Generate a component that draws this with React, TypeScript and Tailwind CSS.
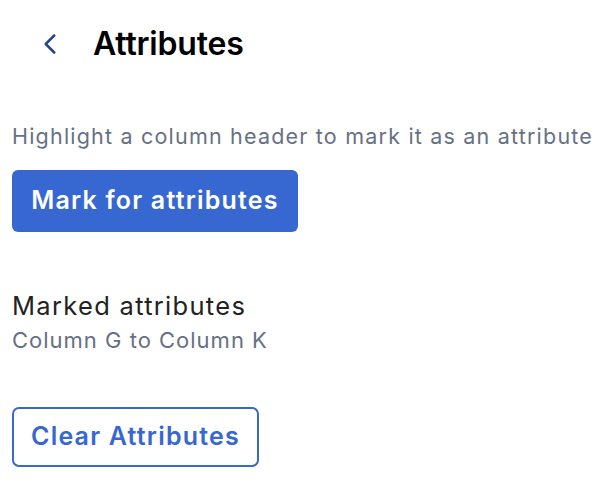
import { ChevronLeft } from "lucide-react";

const App = () => {
  return (
    <div className="min-h-screen bg-white px-3 font-['Inter',sans-serif]">
      <div className="flex items-center h-[88px]">
        <button className="w-[81px] flex items-center pl-[21px] text-[#23468f]">
          <ChevronLeft className="h-[34px] w-[34px]" strokeWidth={1.8} />
        </button>
        <h1 className="text-[32px] font-semibold text-black tracking-[-0.2px]">
          Attributes
        </h1>
      </div>
      <p className="mt-[32px] text-[21.5px] leading-[32px] tracking-[1.2px] text-[#667085]">
        Highlight a column header to mark it as an attribute
      </p>
      <button className="mt-[18px] h-[62px] w-[286px] rounded-[6px] bg-[#3767d1] text-[25px] font-semibold tracking-[1.2px] text-white">
        Mark for attributes
      </button>
      <div className="mt-[56px]">
        <p className="text-[25.5px] leading-[36px] tracking-[1.3px] text-[#222]">
          Marked attributes
        </p>
        <p className="text-[22px] leading-[32px] tracking-[1px] text-[#667085]">
          Column G to Column K
        </p>
      </div>
      <button className="mt-[51px] h-[60px] w-[247px] rounded-[7px] border-2 border-[#3767d1] bg-white text-[25px] font-semibold tracking-[1.2px] text-[#3767d1]">
        Clear Attributes
      </button>
    </div>
  );
};

export default App;
